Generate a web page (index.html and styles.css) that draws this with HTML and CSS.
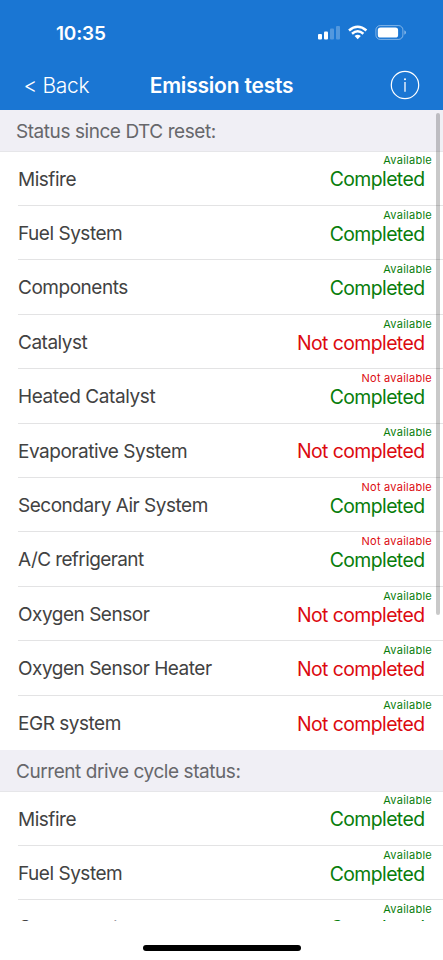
FILE: index.html
```
<!DOCTYPE html>
<html lang="en">
<head>
<meta charset="utf-8">
<title>Emission tests</title>
<link rel="stylesheet" href="styles.css">
</head>
<body>
<div class="screen">
  <header class="top">
    <div class="status-bar">
      <span class="time">10:35</span>
      <svg class="status-icons" width="88" height="16" viewBox="0 0 88 16">
        <g fill="#fff">
          <rect x="0" y="9" width="4" height="5.5" rx="1"/>
          <rect x="6" y="6.5" width="4" height="8" rx="1"/>
          <rect x="12" y="3.5" width="4" height="11" rx="1" opacity=".25"/>
          <rect x="18" y="1" width="4" height="13.500" rx="1" opacity=".25"/>
        </g>
        <g fill="none" stroke="#fff" stroke-width="2.500">
          <path d="M31 5.500Q39.700-2.100 48.400 5.500"/>
          <path d="M34 8.700Q39.700 3.800 45.400 8.700"/>
        </g>
        <path fill="#fff" d="M36.600 11Q39.700 8.300 42.800 11L39.700 14.300Z"/>
        <rect x="57.900" y=".6" width="27" height="13.800" rx="4.300" fill="none" stroke="#fff" stroke-opacity=".45"/>
        <rect x="59.800" y="2.400" width="20.300" height="10.200" rx="2.700" fill="#fff"/>
        <path fill="#fff" fill-opacity=".5" d="M86.400 5.300Q88 6 88 7.500T86.400 9.700Z"/>
      </svg>
    </div>
    <nav class="nav">
      <span class="back">&lt; Back</span>
      <h1 class="title">Emission tests</h1>
      <svg class="info" width="30" height="30" viewBox="0 0 30 30">
        <circle cx="15" cy="15" r="13.700" fill="none" stroke="#fff" stroke-width="1.200"/>
        <circle cx="15" cy="9.200" r="1" fill="#fff"/>
        <path d="M15 12V21.800" stroke="#fff" stroke-width="1.300"/>
      </svg>
    </nav>
  </header>
  <main class="list">
    <h2 class="section">Status since DTC reset:</h2>
    <div class="row"><span class="name">Misfire</span><div class="state"><span class="avail ok">Available</span><span class="result ok">Completed</span></div></div>
    <div class="row"><span class="name">Fuel System</span><div class="state"><span class="avail ok">Available</span><span class="result ok">Completed</span></div></div>
    <div class="row"><span class="name">Components</span><div class="state"><span class="avail ok">Available</span><span class="result ok">Completed</span></div></div>
    <div class="row"><span class="name">Catalyst</span><div class="state"><span class="avail ok">Available</span><span class="result bad">Not completed</span></div></div>
    <div class="row"><span class="name loose">Heated Catalyst</span><div class="state"><span class="avail bad">Not available</span><span class="result ok">Completed</span></div></div>
    <div class="row"><span class="name">Evaporative System</span><div class="state"><span class="avail ok">Available</span><span class="result bad">Not completed</span></div></div>
    <div class="row"><span class="name">Secondary Air System</span><div class="state"><span class="avail bad">Not available</span><span class="result ok">Completed</span></div></div>
    <div class="row"><span class="name tight">A/C refrigerant</span><div class="state"><span class="avail bad">Not available</span><span class="result ok">Completed</span></div></div>
    <div class="row"><span class="name">Oxygen Sensor</span><div class="state"><span class="avail ok">Available</span><span class="result bad">Not completed</span></div></div>
    <div class="row"><span class="name">Oxygen Sensor Heater</span><div class="state"><span class="avail ok">Available</span><span class="result bad">Not completed</span></div></div>
    <div class="row last"><span class="name">EGR system</span><div class="state"><span class="avail ok">Available</span><span class="result bad">Not completed</span></div></div>
    <h2 class="section">Current drive cycle status:</h2>
    <div class="row"><span class="name">Misfire</span><div class="state"><span class="avail ok">Available</span><span class="result ok">Completed</span></div></div>
    <div class="row"><span class="name">Fuel System</span><div class="state"><span class="avail ok">Available</span><span class="result ok">Completed</span></div></div>
    <div class="row"><span class="name">Components</span><div class="state"><span class="avail ok">Available</span><span class="result ok">Completed</span></div></div>
    <div class="scrollbar"></div>
  </main>
  <footer class="home"><div class="home-bar"></div></footer>
</div>
</body>
</html>
```
FILE: styles.css
```
* { box-sizing: border-box; }
body {
  margin: 0;
  background: #fff;
  font-family: Inter, "Liberation Sans", sans-serif;
}
.screen {
  display: flex;
  flex-direction: column;
  width: 443px;
  height: 960px;
  overflow: hidden;
}
.top {
  height: 110px;
  flex: none;
  background: #1a76d3;
  color: #fff;
}
.status-bar {
  display: flex;
  justify-content: space-between;
  align-items: center;
  height: 60px;
  padding: 6px 37px 0 56px;
}
.time { font-size: 19px; font-weight: 600; letter-spacing: -.2px; }
.nav {
  display: grid;
  grid-template-columns: 1fr auto 1fr;
  align-items: center;
  height: 50px;
  padding: 0 23.500px 0 23.500px;
}
.back { font-size: 21px; font-weight: 300; letter-spacing: -.3px; }
.title { margin: 0; font-size: 21px; font-weight: 600; letter-spacing: -.2px; }
.info { justify-self: end; }
.list {
  position: relative;
  flex: none;
  height: 811px;
  overflow: hidden;
}
.section {
  height: 41.500px;
  margin: 0;
  padding-left: 16px;
  background: #f0eff5;
  border-bottom: 1px solid #e6e6e9;
  color: #67676b;
  font-size: 19px;
  font-weight: 400;
  line-height: 43.500px;
  letter-spacing: -.44px;
}
.row {
  display: flex;
  justify-content: space-between;
  height: 54.430px;
  margin-left: 18px;
  border-bottom: 1px solid #e3e3e4;
  white-space: nowrap;
}
.row.last { border-bottom: 0; }
.name {
  color: #424242;
  font-size: 19px;
  line-height: 56.500px;
  letter-spacing: -.48px;
}
.name.loose { letter-spacing: -.4px; }
.name.tight { letter-spacing: -.6px; }
.state {
  display: flex;
  flex-direction: column;
  align-items: flex-end;
  padding: 1.800px 11px 0 0;
}
.avail { font-size: 11px; line-height: 14px; letter-spacing: .25px; }
.result {
  padding-right: 7.500px;
  font-size: 19.400px;
  line-height: 24.500px;
  letter-spacing: -.57px;
}
.ok { color: #087d0b; }
.bad { color: #dc0a10; }
.scrollbar {
  position: absolute;
  top: 3px;
  right: 3px;
  width: 4px;
  height: 502px;
  border-radius: 2px;
  background: rgba(0, 0, 0, .21);
}
.home {
  display: flex;
  justify-content: center;
  padding-top: 24px;
}
.home-bar {
  width: 158px;
  height: 6px;
  border-radius: 3px;
  background: #000;
}
```
